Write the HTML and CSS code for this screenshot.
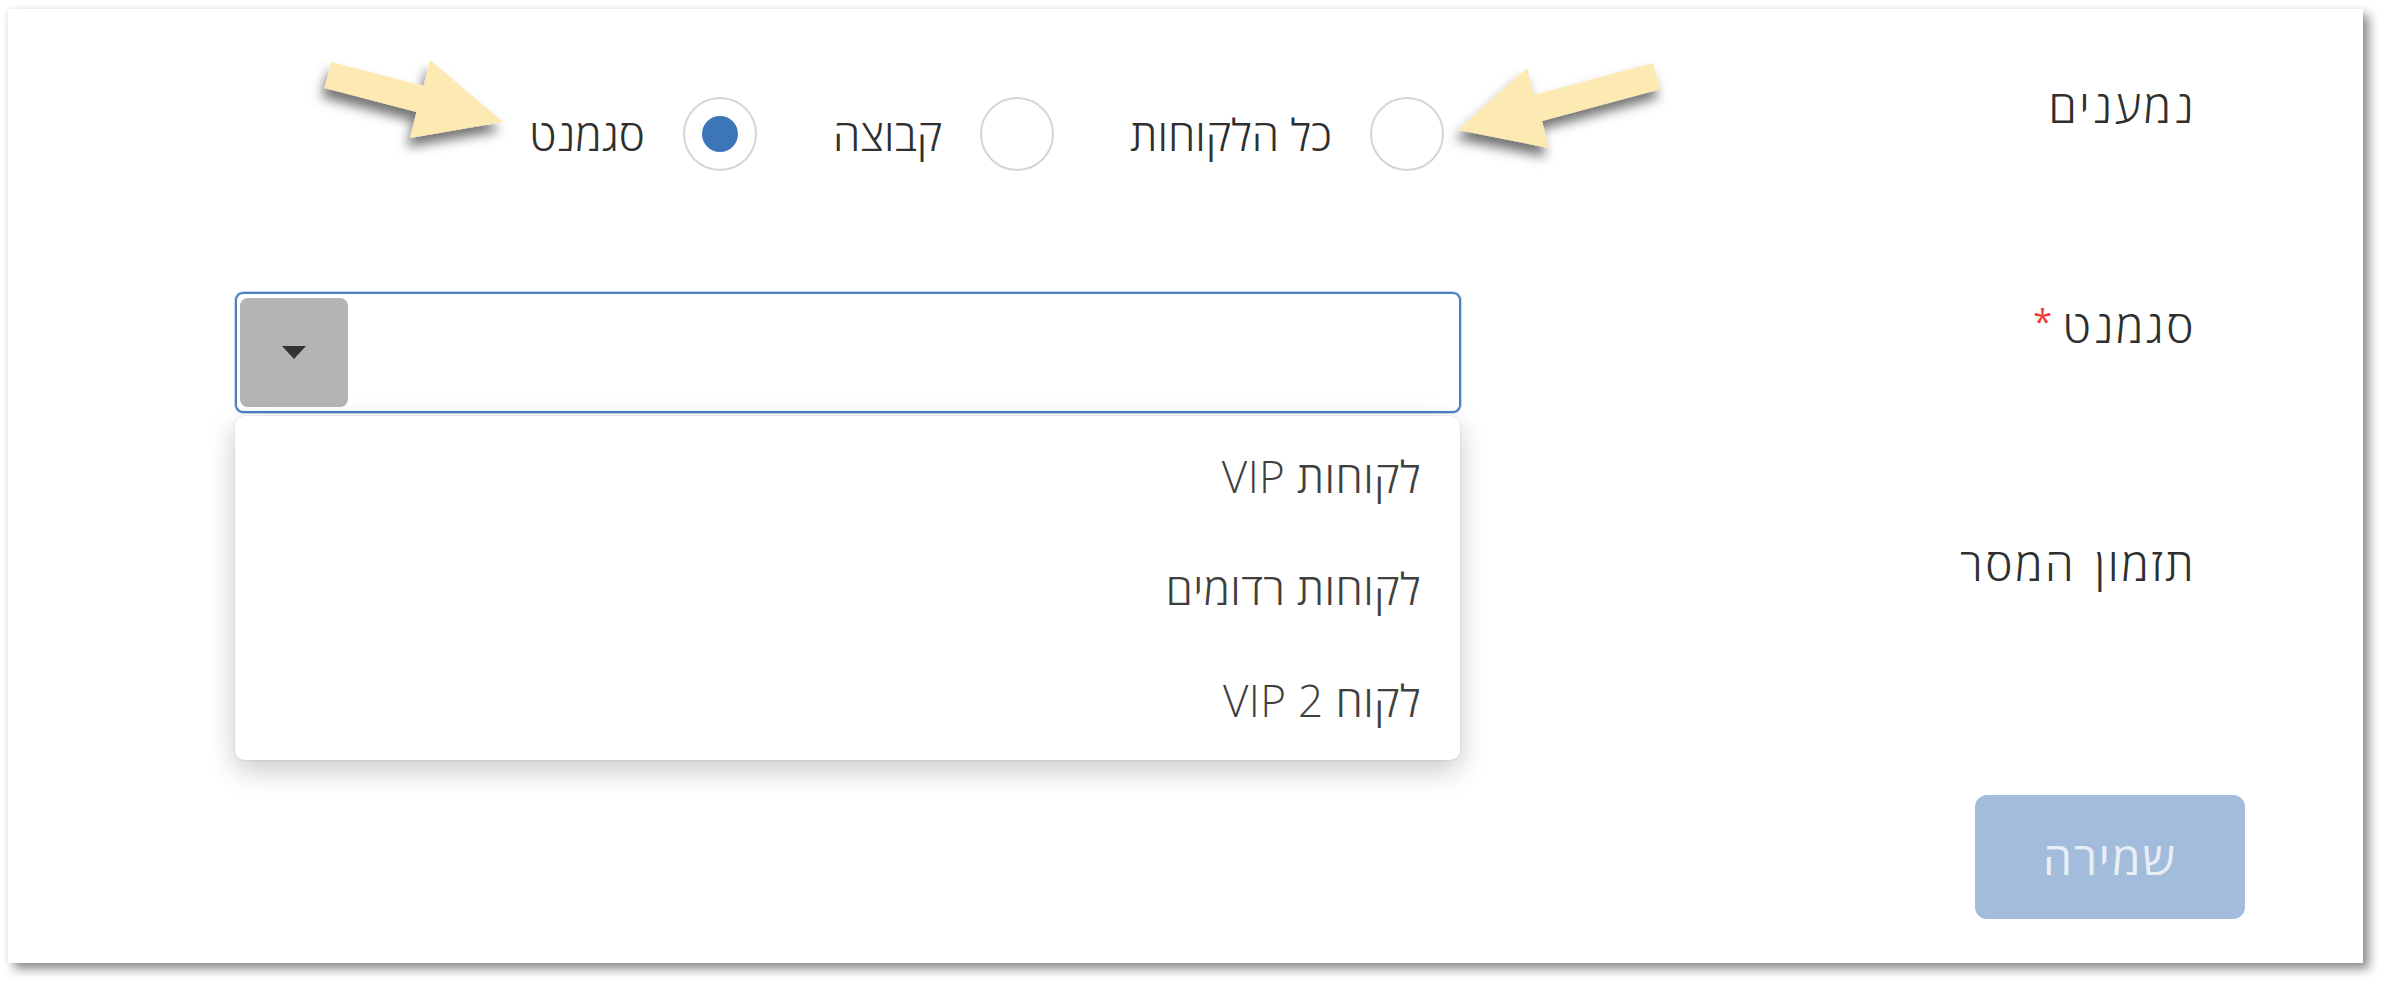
FILE: index.html
```html
<!DOCTYPE html>
<html lang="he" dir="rtl">
<head>
  <meta charset="UTF-8">
  <title>שליחת הודעה</title>
  <link rel="stylesheet" href="styles.css">
</head>
<body>
  <div class="page">
    <div class="card">
      <form class="form">
        <div class="row row-recipients">
          <div class="label">נמענים</div>
          <div class="control">
            <div class="radios">
              <label class="radio"><span class="circle"></span><span class="radio-text">כל הלקוחות</span></label>
              <label class="radio"><span class="circle"></span><span class="radio-text">קבוצה</span></label>
              <label class="radio"><span class="circle checked"></span><span class="radio-text">סגמנט</span></label>
            </div>
          </div>
        </div>

        <div class="row row-segment">
          <div class="label">סגמנט<span class="required">*</span></div>
          <div class="control">
            <div class="select">
              <div class="select-value"></div>
              <div class="select-toggle"><span class="caret"></span></div>
              <ul class="dropdown">
                <li>לקוחות VIP</li>
                <li>לקוחות רדומים</li>
                <li>לקוח VIP 2</li>
              </ul>
            </div>
          </div>
        </div>

        <div class="row row-timing">
          <div class="label">תזמון המסר</div>
          <div class="control"></div>
        </div>

        <div class="footer">
          <button type="button" class="save" disabled>שמירה</button>
        </div>
      </form>
    </div>

    <!-- annotation arrows drawn over the screenshot -->
    <svg class="arrows" width="2392" height="993" viewBox="0 0 2392 993">
      <defs>
        <filter id="arrow-shadow" x="-30%" y="-30%" width="160%" height="180%">
          <feDropShadow dx="-3" dy="9" stdDeviation="6" flood-color="#000" flood-opacity="0.55"/>
        </filter>
      </defs>
      <polygon class="arrow" points="331.5,62 423.5,86 430,60 503,122 410,138 416.5,112 324.5,88"/>
      <polygon class="arrow" points="1653,63 1534,95 1527,68 1458,130 1549,148 1542,121 1661,89"/>
    </svg>
  </div>
</body>
</html>
```

FILE: styles.css
```css
body {
  margin: 0;
  background: #fff;
  font-family: 'Open Sans', 'DejaVu Sans', sans-serif;
  font-weight: 300;
  color: #333;
}

.page {
  position: relative;
  width: 2392px;
  height: 993px;
  overflow: hidden;
}

.card {
  margin: 9px 29px 0 8px;
  height: 954px;
  background: #fff;
  box-shadow: 6px 6px 10px rgba(0, 0, 0, 0.45), 0 0 6px rgba(0, 0, 0, 0.07);
}

.form {
  padding-top: 88px;
}

.row {
  display: flex;
  align-items: flex-start;
  padding-right: 167px;
}

.label {
  flex: 0 0 735px;
  font-size: 46px;
  letter-spacing: 2.5px;
  word-spacing: 4px;
  line-height: 51px;
  color: #2f2f2f;
}

.control {
  flex: 0 0 1226px;
}

/* recipients */
.row-recipients .label {
  margin-top: -17px;
}

.radios {
  display: flex;
  align-items: center;
  gap: 76px;
  padding-right: 17px;
}

.radio {
  display: flex;
  align-items: center;
  gap: 38px;
  font-size: 44px;
  line-height: 51px;
  color: #2f2f2f;
}

.circle {
  width: 70px;
  height: 70px;
  border: 2px solid #d6d6d6;
  border-radius: 50%;
  display: flex;
  align-items: center;
  justify-content: center;
  box-sizing: content-box;
}

.circle.checked::after {
  content: "";
  width: 36px;
  height: 36px;
  border-radius: 50%;
  background: #3d76b8;
}

/* segment */
.row-segment {
  margin-top: 121px;
}

.row-segment .label {
  margin-top: 8px;
}

.required {
  color: #f23a3a;
  font-size: 34px;
  font-weight: 400;
  vertical-align: top;
  position: relative;
  top: -4px;
  margin-right: 8px;
}

.select {
  position: relative;
  display: flex;
  border: 2px solid #4a7fc0;
  border-radius: 8px;
  box-shadow: 0 0 0 1px rgba(74, 127, 192, 0.3);
  padding: 4px 3px;
  height: 109px;
}

.select-value {
  flex: 1;
}

.select-toggle {
  width: 108px;
  height: 109px;
  background: #b4b4b4;
  border-radius: 8px;
  display: flex;
  align-items: center;
  justify-content: center;
}

.caret {
  width: 0;
  height: 0;
  border-left: 12px solid transparent;
  border-right: 12px solid transparent;
  border-top: 13px solid #333;
}

.dropdown {
  position: absolute;
  top: calc(100% + 5px);
  left: -2px;
  right: -1px;
  margin: 0;
  padding: 4px 0;
  list-style: none;
  background: #fff;
  border-radius: 10px;
  box-shadow: 0 10px 28px rgba(0, 0, 0, 0.22), 0 0 0 1px rgba(0, 0, 0, 0.04);
  z-index: 2;
}

.dropdown li {
  height: 112px;
  display: flex;
  align-items: center;
  padding-right: 39px;
  font-size: 44px;
  letter-spacing: 0.4px;
  color: #3f3f3f;
}

/* timing */
.row-timing {
  margin-top: 125px;
}

/* footer */
.footer {
  margin-top: 206px;
  padding-right: 118px;
}

.save {
  width: 270px;
  height: 124px;
  border: none;
  border-radius: 12px;
  background: #a3bcdb;
  color: #e9eef6;
  font-family: 'Open Sans', 'DejaVu Sans', sans-serif;
  font-weight: 400;
  font-size: 46px;
  letter-spacing: 2px;
}

.arrows {
  position: absolute;
  top: 0;
  left: 0;
  pointer-events: none;
  z-index: 5;
}

.arrow {
  fill: #fde9b2;
  filter: url(#arrow-shadow);
}
```
